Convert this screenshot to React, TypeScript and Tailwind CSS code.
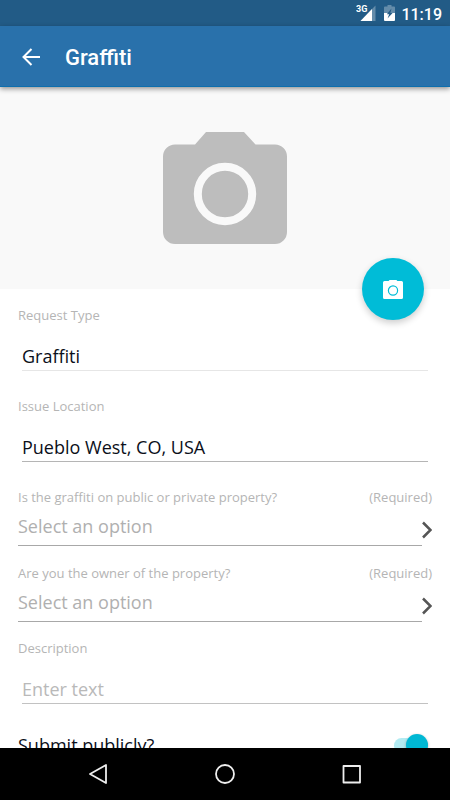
import { useState } from "react";

const questions = [
  {
    id: "property-kind",
    label: "Is the graffiti on public or private property?",
    options: ["Public", "Private"],
  },
  {
    id: "property-owner",
    label: "Are you the owner of the property?",
    options: ["Yes", "No"],
  },
];

function StatusBar() {
  return (
    <div className="flex h-[26px] shrink-0 items-center justify-end bg-[#225b86] pr-2 text-white">
      <svg className="mr-2 h-4 w-5" viewBox="0 0 20 16">
        <path d="M19.500 0.500V16H4.500z" fill="#fff" fillOpacity="0.3" />
        <path d="M16 4V16H4.500z" fill="#fff" />
        <text
          x="0"
          y="7"
          fill="#fff"
          className="font-[Roboto] text-[9px] font-bold"
        >
          3G
        </text>
      </svg>
      <svg className="mr-[6px] h-4 w-[11px]" viewBox="0 0 11 16">
        <path
          d="M3.500 0h4v1.500H10a1 1 0 0 1 1 1V8H0V2.500a1 1 0 0 1 1-1h2.500z"
          fill="#fff"
          fillOpacity="0.3"
        />
        <path d="M0 8h11v7a1 1 0 0 1-1 1H1a1 1 0 0 1-1-1z" fill="#fff" />
        <path d="M7.500 3.500L2.800 9.200h2.400L3.500 13.500L8.600 8H6.300z" fill="#225b86" />
      </svg>
      <span className="pt-[3px] font-[Roboto] text-[16px] leading-5 font-medium">
        11:19
      </span>
    </div>
  );
}

function AppBar() {
  return (
    <header className="relative z-10 flex h-[61px] shrink-0 items-center border-b border-[#0d6fae] bg-[#2971ab] pt-[2px] pl-[22px] text-white shadow-[0_2px_5px_rgba(0,0,0,0.4)]">
      <button type="button" aria-label="Back" className="mr-[25px]">
        <svg
          className="h-[18px] w-[18px]"
          viewBox="0 0 18 18"
          fill="none"
          stroke="currentColor"
          strokeWidth="2"
        >
          <path d="M18 9H1.500M9.500 1L1.500 9l8 8" />
        </svg>
      </button>
      <h1 className="pt-[2px] font-[Roboto] text-[22px] leading-7 font-medium">
        Graffiti
      </h1>
    </header>
  );
}

function Photo() {
  return (
    <section className="relative flex h-[202px] shrink-0 justify-center bg-[#f9f9f9] pt-[45px]">
      <svg className="h-[112px] w-[124px]" viewBox="0 0 124 112">
        <path
          d="M43 0h38l11.500 12.500h19.500a12 12 0 0 1 12 12V100a12 12 0 0 1-12 12H12a12 12 0 0 1-12-12V24.500a12 12 0 0 1 12-12h20z"
          fill="#bdbdbd"
        />
        <circle
          cx="62"
          cy="62"
          r="27.200"
          fill="none"
          stroke="#f9f9f9"
          strokeWidth="8"
        />
      </svg>
      <button
        type="button"
        aria-label="Take photo"
        className="absolute right-[26px] -bottom-[31px] flex h-[62px] w-[62px] items-center justify-center rounded-full bg-[#00bcd7] shadow-[0_3px_7px_rgba(0,0,0,0.2)]"
      >
        <svg className="h-[19px] w-5" viewBox="0 0 20 19">
          <path
            d="M7 0h6q1 0 1.300 1H18.500a1.500 1.500 0 0 1 1.500 1.500V17.500a1.500 1.500 0 0 1-1.500 1.500H1.500a1.500 1.500 0 0 1-1.500-1.500V2.500a1.500 1.500 0 0 1 1.500-1.500H5.700q.3-1 1.300-1z"
            fill="#fff"
          />
          <circle
            cx="10"
            cy="10.500"
            r="4.600"
            fill="none"
            stroke="#00bcd7"
            strokeWidth="1.200"
          />
        </svg>
      </button>
    </section>
  );
}

type FieldProps = {
  id: string;
  label: string;
  value?: string;
  placeholder?: string;
  lineClass: string;
};

function Field({ id, label, value, placeholder, lineClass }: FieldProps) {
  return (
    <div>
      <label htmlFor={id} className="block text-[13px] leading-5 text-[#b5b5b5]">
        {label}
      </label>
      <div className="mx-1 mt-4">
        <input
          id={id}
          type="text"
          defaultValue={value}
          placeholder={placeholder}
          className={`block h-[30px] w-full border-b text-[18px] text-[#0b0f1a] outline-none placeholder:text-[#b9b9b9] ${lineClass}`}
        />
      </div>
    </div>
  );
}

export default function App() {
  const [isPublic, setIsPublic] = useState(true);

  return (
    <div className="flex h-screen flex-col overflow-hidden bg-white font-['Open_Sans',sans-serif]">
      <StatusBar />
      <AppBar />

      <main className="min-h-0 flex-1 overflow-hidden">
        <Photo />

        <form className="px-[18px] pt-4">
          <div className="flex flex-col gap-[25px]">
            <Field
              id="type"
              label="Request Type"
              value="Graffiti"
              lineClass="border-[#e6e6e6]"
            />
            <Field
              id="location"
              label="Issue Location"
              value="Pueblo West, CO, USA"
              lineClass="border-[#b5b5b5]"
            />
          </div>

          <div className="mt-[25px] mb-4 flex flex-col gap-[17px]">
            {questions.map((q) => (
              <div key={q.id}>
                <div className="flex justify-between text-[13px] leading-5 text-[#b5b5b5]">
                  <label htmlFor={q.id}>{q.label}</label>
                  <span>(Required)</span>
                </div>
                <div className="flex items-center">
                  <select
                    id={q.id}
                    defaultValue=""
                    className="h-[39px] min-w-0 flex-1 appearance-none border-b border-[#a8a8a8] pt-px text-[18px] text-[#b0b0b0] outline-none"
                  >
                    <option value="">Select an option</option>
                    {q.options.map((option) => (
                      <option key={option}>{option}</option>
                    ))}
                  </select>
                  <svg
                    className="mt-[6px] h-[18px] w-[10px]"
                    viewBox="0 0 10 18"
                    fill="none"
                    stroke="#555"
                    strokeWidth="2.500"
                  >
                    <path d="M1 1.500L8.500 9L1 16.500" />
                  </svg>
                </div>
              </div>
            ))}
          </div>

          <Field
            id="description"
            label="Description"
            placeholder="Enter text"
            lineClass="border-[#c2c2c2]"
          />

          {/* Submit publicly */}
          <div className="mt-[25px] flex items-center justify-between pr-1">
            <label
              htmlFor="public"
              className="text-[18px] leading-8 text-[#0b0f1a]"
            >
              Submit publicly?
            </label>
            <div className="relative flex h-[22px] w-[34px] items-center">
              <input
                id="public"
                type="checkbox"
                role="switch"
                checked={isPublic}
                onChange={(e) => setIsPublic(e.target.checked)}
                className="peer h-[15px] w-[34px] appearance-none rounded-full bg-gray-300 checked:bg-[#b2ebf2]"
              />
              <span className="pointer-events-none absolute left-0 h-[22px] w-[22px] rounded-full bg-gray-50 shadow-[0_1px_3px_rgba(0,0,0,0.3)] peer-checked:right-0 peer-checked:left-auto peer-checked:bg-[#00b8d4]" />
            </div>
          </div>
        </form>
      </main>

      <nav className="flex h-[52px] shrink-0 items-center justify-center gap-[106px] bg-black text-[#eee]">
        <button type="button" aria-label="Navigate back">
          <svg
            className="h-5 w-5"
            viewBox="0 0 20 20"
            fill="none"
            stroke="currentColor"
            strokeWidth="1.800"
            strokeLinejoin="round"
          >
            <path d="M17 1v18L1 10z" />
          </svg>
        </button>
        <button type="button" aria-label="Home">
          <svg
            className="h-5 w-5"
            viewBox="0 0 20 20"
            fill="none"
            stroke="currentColor"
            strokeWidth="1.800"
          >
            <circle cx="10" cy="10" r="9" />
          </svg>
        </button>
        <button type="button" aria-label="Recent apps">
          <svg
            className="h-5 w-5"
            viewBox="0 0 20 20"
            fill="none"
            stroke="currentColor"
            strokeWidth="1.800"
            strokeLinejoin="round"
          >
            <rect x="2.500" y="2" width="16.500" height="16.500" />
          </svg>
        </button>
      </nav>
    </div>
  );
}
